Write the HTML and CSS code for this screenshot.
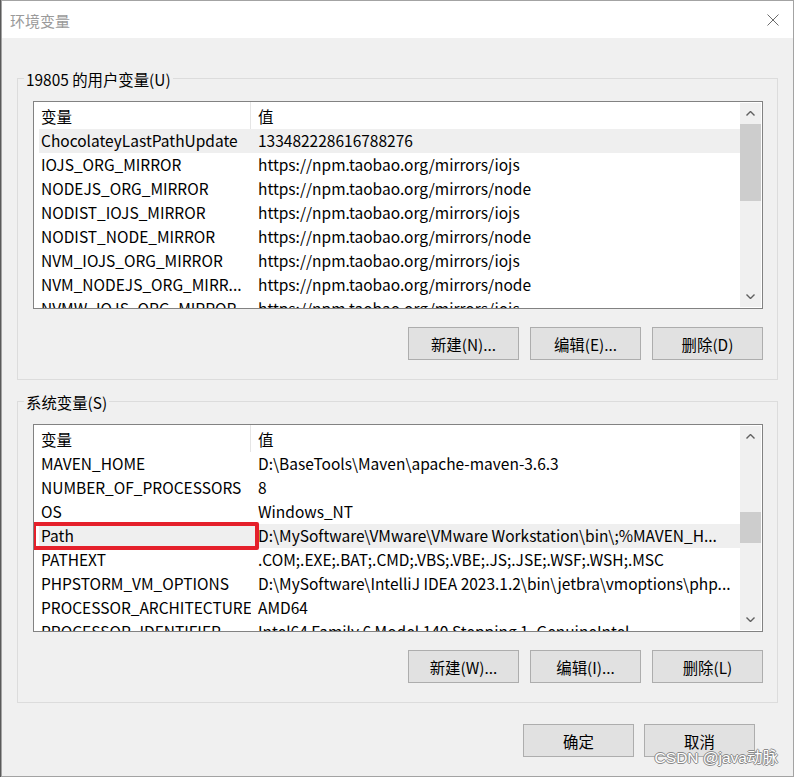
FILE: index.html
```html
<!DOCTYPE html>
<html lang="zh-CN">
<head>
    <meta charset="UTF-8">
    <title>环境变量</title>
    <link rel="stylesheet" href="styles.css">
</head>
<body>
    <div class="window">
        <div class="titlebar">
            <span class="title">环境变量</span>
            <svg class="close" width="12" height="12" viewBox="0 0 12 12">
                <path d="M0.5 0.5 L11.5 11.5 M11.5 0.5 L0.5 11.5" stroke="#6b6b6b" stroke-width="1" fill="none"/>
            </svg>
        </div>

        <div class="dialog">
            <fieldset class="group">
                <legend>19805 的用户变量(U)</legend>
                <div class="listview">
                    <div class="list-main">
                        <div class="list-head">
                            <div class="col-name">变量</div>
                            <div class="col-value">值</div>
                        </div>
                        <div class="row selected"><div class="col-name">ChocolateyLastPathUpdate</div><div class="col-value">133482228616788276</div></div>
                        <div class="row"><div class="col-name">IOJS_ORG_MIRROR</div><div class="col-value">https://npm.taobao.org/mirrors/iojs</div></div>
                        <div class="row"><div class="col-name">NODEJS_ORG_MIRROR</div><div class="col-value">https://npm.taobao.org/mirrors/node</div></div>
                        <div class="row"><div class="col-name">NODIST_IOJS_MIRROR</div><div class="col-value">https://npm.taobao.org/mirrors/iojs</div></div>
                        <div class="row"><div class="col-name">NODIST_NODE_MIRROR</div><div class="col-value">https://npm.taobao.org/mirrors/node</div></div>
                        <div class="row"><div class="col-name">NVM_IOJS_ORG_MIRROR</div><div class="col-value">https://npm.taobao.org/mirrors/iojs</div></div>
                        <div class="row"><div class="col-name">NVM_NODEJS_ORG_MIRR...</div><div class="col-value">https://npm.taobao.org/mirrors/node</div></div>
                        <div class="row"><div class="col-name">NVMW_IOJS_ORG_MIRROR</div><div class="col-value">https://npm.taobao.org/mirrors/iojs</div></div>
                    </div>
                    <div class="scrollbar">
                        <div class="arrow">
                            <svg width="9" height="5" viewBox="0 0 9 5"><polyline points="0.5,4.5 4.5,0.5 8.5,4.5" fill="none" stroke="#606060" stroke-width="1.4"/></svg>
                        </div>
                        <div class="track"><div class="thumb" style="margin-top: 0; height: 77px;"></div></div>
                        <div class="arrow">
                            <svg width="9" height="5" viewBox="0 0 9 5"><polyline points="0.5,0.5 4.5,4.5 8.5,0.5" fill="none" stroke="#606060" stroke-width="1.4"/></svg>
                        </div>
                    </div>
                </div>
                <div class="buttons">
                    <button class="btn">新建(N)...</button>
                    <button class="btn">编辑(E)...</button>
                    <button class="btn">删除(D)</button>
                </div>
            </fieldset>

            <fieldset class="group">
                <legend>系统变量(S)</legend>
                <div class="listview">
                    <div class="list-main">
                        <div class="list-head">
                            <div class="col-name">变量</div>
                            <div class="col-value">值</div>
                        </div>
                        <div class="row"><div class="col-name">MAVEN_HOME</div><div class="col-value">D:\BaseTools\Maven\apache-maven-3.6.3</div></div>
                        <div class="row"><div class="col-name">NUMBER_OF_PROCESSORS</div><div class="col-value">8</div></div>
                        <div class="row"><div class="col-name">OS</div><div class="col-value">Windows_NT</div></div>
                        <div class="row selected">
                            <div class="col-name">Path</div><div class="col-value">D:\MySoftware\VMware\VMware Workstation\bin\;%MAVEN_H...</div>
                            <span class="mark"></span>
                        </div>
                        <div class="row"><div class="col-name">PATHEXT</div><div class="col-value">.COM;.EXE;.BAT;.CMD;.VBS;.VBE;.JS;.JSE;.WSF;.WSH;.MSC</div></div>
                        <div class="row"><div class="col-name">PHPSTORM_VM_OPTIONS</div><div class="col-value">D:\MySoftware\IntelliJ IDEA 2023.1.2\bin\jetbra\vmoptions\php...</div></div>
                        <div class="row"><div class="col-name">PROCESSOR_ARCHITECTURE</div><div class="col-value">AMD64</div></div>
                        <div class="row"><div class="col-name">PROCESSOR_IDENTIFIER</div><div class="col-value">Intel64 Family 6 Model 140 Stepping 1, GenuineIntel</div></div>
                    </div>
                    <div class="scrollbar">
                        <div class="arrow">
                            <svg width="9" height="5" viewBox="0 0 9 5"><polyline points="0.5,4.5 4.5,0.5 8.5,4.5" fill="none" stroke="#606060" stroke-width="1.4"/></svg>
                        </div>
                        <div class="track"><div class="thumb" style="margin-top: 65px; height: 31px;"></div></div>
                        <div class="arrow">
                            <svg width="9" height="5" viewBox="0 0 9 5"><polyline points="0.5,0.5 4.5,4.5 8.5,0.5" fill="none" stroke="#606060" stroke-width="1.4"/></svg>
                        </div>
                    </div>
                </div>
                <div class="buttons">
                    <button class="btn">新建(W)...</button>
                    <button class="btn">编辑(I)...</button>
                    <button class="btn">删除(L)</button>
                </div>
            </fieldset>

            <div class="footer-buttons">
                <button class="btn">确定</button>
                <button class="btn">取消</button>
            </div>
        </div>

        <div class="watermark">CSDN @java动脉</div>
    </div>
</body>
</html>
```

FILE: styles.css
```css
body {
    margin: 0;
    background: #5a5a5a;
    font-family: "Noto Sans CJK SC", sans-serif;
    font-size: 15px;
    color: #000;
}

.window {
    margin-left: 1px;
    width: 793px;
    height: 777px;
    box-sizing: border-box;
    border: 1px solid #a3a3a3;
    background: #f0f0f0;
    position: relative;
    overflow: hidden;
}

.titlebar {
    height: 37px;
    background: #fff;
    display: flex;
    align-items: center;
    justify-content: space-between;
    padding: 0 14px 0 8px;
}

.title {
    color: #9a9a9a;
    font-size: 15px;
    line-height: 20px;
    margin-top: 2px;
}

.close {
    display: block;
    margin-top: 1px;
}

.dialog {
    padding: 30px 15px 0 15px;
}

.group {
    margin: 0 0 11px 0;
    padding: 13px 14px 19px 15px;
    border: 1px solid #dcdcdc;
    min-width: 0;
}

.group legend {
    margin-left: -9px;
    padding: 0 2px;
    font-size: 15.4px;
    line-height: 22px;
    height: 20px;
}

.listview {
    display: flex;
    height: 208px;
    box-sizing: border-box;
    border: 1px solid #828282;
    background: #fff;
    overflow: hidden;
    font-size: 15.5px;
}

.list-main {
    flex: 1;
    min-width: 0;
    overflow: hidden;
}

.list-head {
    display: flex;
    height: 27px;
    line-height: 29px;
    margin-left: 5px;
}

.list-head .col-name {
    border-right: 1px solid #e5e5e5;
}

.row {
    display: flex;
    height: 24px;
    line-height: 22px;
    margin-left: 5px;
    position: relative;
}

.row.selected {
    background: #efefef;
}

.col-name {
    width: 212px;
    flex-shrink: 0;
    box-sizing: border-box;
    padding-left: 2px;
    white-space: nowrap;
    overflow: hidden;
}

.col-value {
    flex: 1;
    padding-left: 7px;
    white-space: nowrap;
    overflow: hidden;
}

.mark {
    position: absolute;
    left: -7px;
    top: -2px;
    width: 227px;
    height: 28px;
    box-sizing: border-box;
    border: 4px solid #e5202b;
    border-radius: 2px;
}

.scrollbar {
    width: 21px;
    margin: 1px 1px 1px 0;
    background: #f0f0f0;
    display: flex;
    flex-direction: column;
}

.arrow {
    height: 21px;
    display: flex;
    align-items: center;
    justify-content: center;
}

.arrow svg {
    display: block;
}

.track {
    flex: 1;
}

.thumb {
    background: #cdcdcd;
}

.buttons {
    display: flex;
    justify-content: flex-end;
    gap: 11px;
    margin-top: 18px;
}

.btn {
    width: 111px;
    height: 33px;
    background: #e1e1e1;
    border: 1px solid #adadad;
    font-family: inherit;
    font-size: 15.4px;
    color: #000;
    padding: 0;
}

.footer-buttons {
    display: flex;
    justify-content: flex-end;
    gap: 10px;
    margin-top: 21px;
    padding-right: 23px;
}

.watermark {
    position: absolute;
    right: 15px;
    bottom: 9px;
    font-family: "Liberation Sans", "Noto Sans CJK SC", sans-serif;
    font-size: 15.5px;
    color: #fff;
    text-shadow: 1px 0 0 #8a8a8a, -1px 0 0 #8a8a8a, 0 1px 0 #8a8a8a, 0 -1px 0 #8a8a8a;
}
```
